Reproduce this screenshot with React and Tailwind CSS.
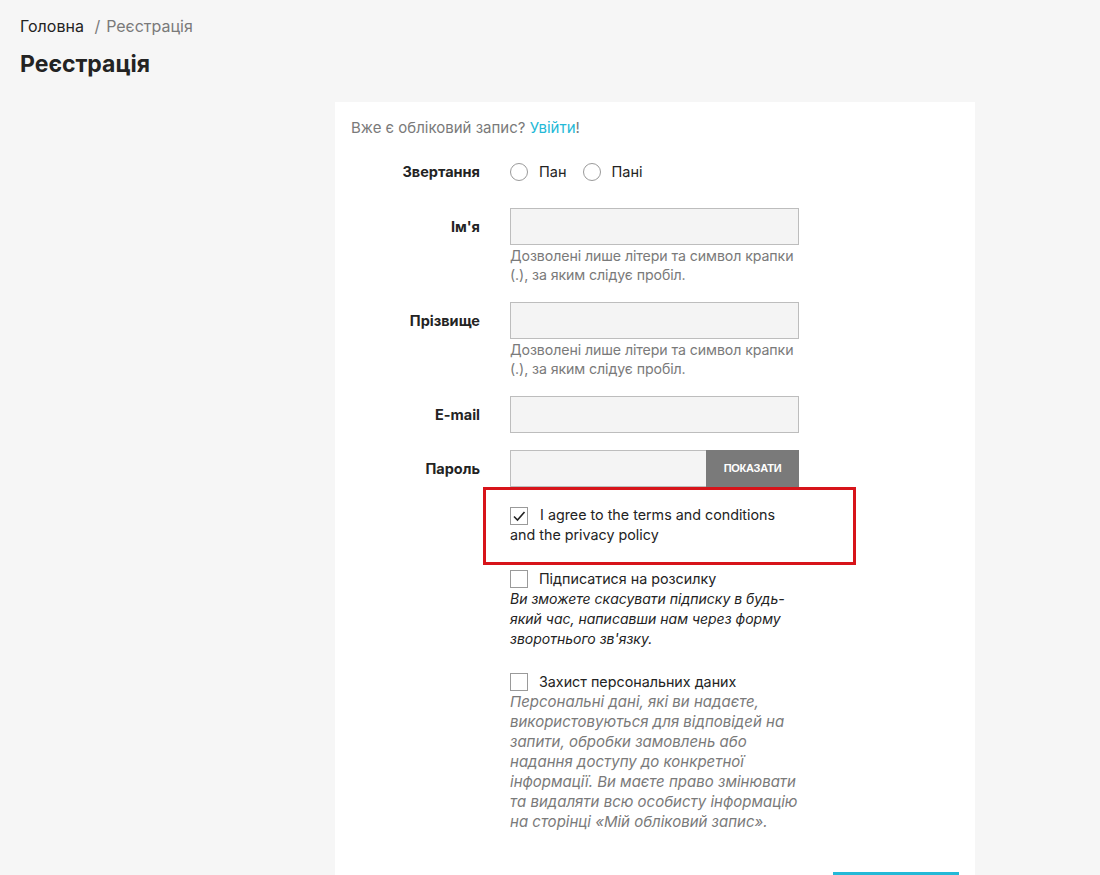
import React, { useState } from 'react';

const font = { fontFamily: 'Inter, "Noto Sans", sans-serif' };

const Field = ({ label, children, help }) => (
  <div className={`flex ${help ? 'mb-[18px]' : 'mb-[17px]'}`}>
    <div className="w-[129px] h-[37px] flex items-center justify-end text-[14.5px] font-bold text-[#232323]">{label}</div>
    <div className="ml-[30px] w-[289px]">
      {children}
      {help && <p className="mt-px text-[14.2px] tracking-[-0.1px] leading-[19px] text-[#7a7a7a]">{help}</p>}
    </div>
  </div>
);

const Box = ({ checked }) => (
  <span className="inline-flex w-[18px] h-[18px] border border-[#9a9a9a] bg-white items-center justify-center align-[-3px] shrink-0">
    {checked && (
      <svg width="14" height="14" viewBox="0 0 14 14" fill="none" stroke="#232323" strokeWidth="1.6">
        <path d="M2 7.5 L5.5 11 L12.5 3" />
      </svg>
    )}
  </span>
);

export default function App() {
  const [title, setTitle] = useState('');
  const helpText = 'Дозволені лише літери та символ крапки (.), за яким слідує пробіл.';

  return (
    <div className="min-h-screen bg-[#f6f6f6] text-[#232323]" style={font}>
      <div className="px-5 pt-[16px]">
        <nav className="text-[16px] leading-[20px] text-[#232323]">
          Головна <span className="text-[#7a7a7a] mx-[6px]">/</span>
          <span className="text-[#7a7a7a]">Реєстрація</span>
        </nav>
        <h1 className="mt-[15px] text-[23px] font-bold leading-[26px]">Реєстрація</h1>
      </div>

      <div className="ml-[335px] mt-[25px] w-[640px] bg-white px-4 pt-[16px] pb-10">
        <p className="text-[15px] leading-[20px] text-[#7a7a7a]">
          Вже є обліковий запис? <a className="text-[#24b9d7]" href="#">Увійти</a>!
        </p>

        <div className="flex mt-[24px] mb-[26px] h-[20px] items-center">
          <div className="w-[129px] text-right text-[14.5px] font-bold">Звертання</div>
          <div className="ml-[30px] flex items-center text-[14.5px]">
            {['Пан', 'Пані'].map((t) => (
              <label key={t} className="flex items-center mr-[16px] cursor-pointer" onClick={() => setTitle(t)}>
                <span className="w-[18px] h-[18px] rounded-full border border-[#9a9a9a] bg-white flex items-center justify-center">
                  {title === t && <span className="w-[8px] h-[8px] rounded-full bg-[#232323]" />}
                </span>
                <span className="ml-[11px]">{t}</span>
              </label>
            ))}
          </div>
        </div>

        <Field label="Ім'я" help={helpText}>
          <input className="w-full h-[37px] bg-[#f4f4f4] border border-[#bdbdbd] outline-none px-2" />
        </Field>
        <Field label="Прізвище" help={helpText}>
          <input className="w-full h-[37px] bg-[#f4f4f4] border border-[#bdbdbd] outline-none px-2" />
        </Field>
        <Field label="E-mail">
          <input className="w-full h-[37px] bg-[#f4f4f4] border border-[#bdbdbd] outline-none px-2" />
        </Field>

        <div className="flex">
          <div className="w-[129px] h-[37px] flex items-center justify-end text-[14.5px] font-bold">Пароль</div>
          <div className="ml-[30px] w-[289px] flex h-[37px]">
            <input type="password" className="flex-1 min-w-0 bg-[#f4f4f4] border border-[#bdbdbd] border-r-0 outline-none px-2" />
            <button className="w-[93px] bg-[#7a7a7a] text-white text-[11px] font-bold tracking-[-0.3px]" style={{ fontFamily: '"Liberation Sans", Arial, sans-serif' }}>
              ПОКАЗАТИ
            </button>
          </div>
        </div>

        <div className="flex flex-col ml-[132px] w-[373px]">
          <div className="border-[3px] border-[#d7141a] pt-[15px] pb-[17px] pl-[24px] pr-4 text-[14.3px] leading-[20px]">
            <Box checked /> <span className="ml-[8px]">I agree to the terms and conditions</span>
            <br />and the privacy policy
          </div>
        </div>

        <div className="ml-[159px] w-[289px] mt-[4px] text-[14.3px] leading-[20px]">
          <div className="flex items-center h-[20px]">
            <Box /><span className="ml-[11px]">Підписатися на розсилку</span>
          </div>
          <p className="italic text-[#232323] text-[14px]">
            Ви зможете скасувати підписку в будь-який час, написавши нам через форму зворотнього зв'язку.
          </p>

          <div className="flex items-center h-[20px] mt-[23px]">
            <Box /><span className="ml-[11px]">Захист персональних даних</span>
          </div>
          <p className="italic text-[#7a7a7a] text-[15px]">
            Персональні дані, які ви надаєте, використовуються для відповідей на запити, обробки замовлень або надання доступу до конкретної інформації. Ви маєте право змінювати та видаляти всю особисту інформацію на сторінці «Мій обліковий запис».
          </p>
        </div>

        <div className="flex justify-end mt-[40px]">
          <button className="w-[126px] h-[40px] bg-[#24b9d7] text-white text-[13px] font-bold uppercase">Зберегти</button>
        </div>
      </div>
    </div>
  );
}
